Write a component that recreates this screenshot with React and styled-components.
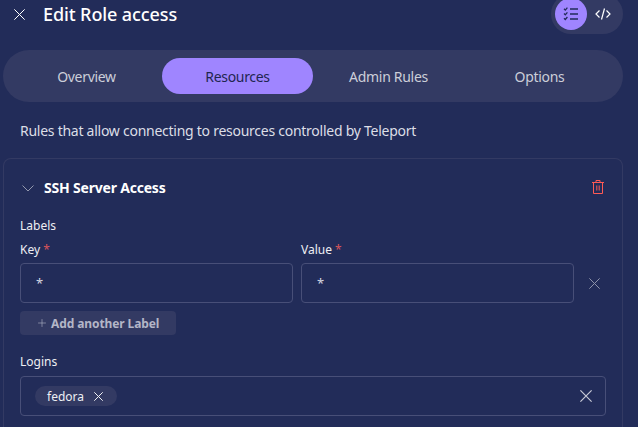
import React from "react";
import styled, { createGlobalStyle } from "styled-components";
import { Plus } from "lucide-react";

const GlobalStyle = createGlobalStyle`
  html, body {
    margin: 0;
    height: 427px;
    overflow: hidden;
    background: #222c59;
  }
  * { box-sizing: border-box; }
`;

const Page = styled.div`
  width: 638px;
  height: 427px;
  overflow: hidden;
  padding: 0 15px 0 3px;
  color: #fff;
  font-family: "Noto Sans", "Open Sans", sans-serif;
`;

const Header = styled.div`
  display: flex;
  align-items: center;
  height: 40px;
  margin-top: -6px;
  padding-left: 8px;
`;

const CloseButton = styled.div`
  display: flex;
  align-items: center;
  justify-content: center;
  width: 16px;
  height: 16px;
  margin-top: 1px;
  color: #fff;
`;

const Title = styled.h1`
  margin: 0 0 0 16px;
  flex: 1;
  font-size: 18px;
  line-height: 24px;
  font-weight: 500;
  letter-spacing: -0.1px;
`;

const ModeSwitch = styled.div`
  display: flex;
  align-items: center;
  width: 72px;
  height: 40px;
  padding: 0 4px;
  border-radius: 20px;
  background: #333a63;
`;

const ModeButton = styled.div`
  display: flex;
  align-items: center;
  justify-content: center;
  width: 32px;
  height: 32px;
  border-radius: 50%;
  background: ${(p) => (p.$active ? "#9f85ff" : "transparent")};
  color: ${(p) => (p.$active ? "#222c59" : "#fff")};
`;

const Tabs = styled.div`
  display: grid;
  grid-template-columns: repeat(4, 151px);
  width: 620px;
  height: 52px;
  margin-top: 16px;
  padding: 8px;
  border-radius: 26px;
  background: #333a63;
`;

const Tab = styled.div`
  display: flex;
  align-items: center;
  justify-content: center;
  border-radius: 18px;
  font-size: 14px;
  letter-spacing: -0.3px;
  background: ${(p) => (p.$active ? "#9f85ff" : "transparent")};
  color: ${(p) => (p.$active ? "#1f2650" : "#ccced9")};
`;

const Description = styled.p`
  margin: 19px 0 0 17px;
  font-size: 14px;
  line-height: 20px;
  letter-spacing: -0.26px;
  color: #dcdee6;
`;

const Card = styled.section`
  width: 620px;
  height: 290px;
  margin-top: 17px;
  padding: 19px 16px 0;
  border: 1px solid #333a63;
  border-bottom: 0;
  border-radius: 8px 8px 0 0;
`;

const CardHead = styled.div`
  display: flex;
  align-items: center;
  height: 20px;
`;

const Chevron = styled.div`
  display: flex;
  align-items: center;
  justify-content: center;
  width: 16px;
  height: 16px;
  margin-right: 8px;
  color: #9499ae;
`;

const CardTitle = styled.h2`
  margin: 0;
  flex: 1;
  font-size: 14px;
  line-height: 20px;
  font-weight: 700;
  letter-spacing: -0.2px;
`;

const TrashIcon = styled.div`
  display: flex;
  margin: -2px 2px 0 0;
  color: #ff5a55;
`;

const SectionLabel = styled.div`
  margin-top: 20px;
  font-size: 12px;
  line-height: 16px;
  color: #eeeff3;
`;

const FieldRow = styled.div`
  display: grid;
  grid-template-columns: 273px 273px 40px;
  column-gap: 8px;
  margin-top: 8px;
`;

const Field = styled.div`
  display: flex;
  flex-direction: column;
`;

const FieldLabel = styled.label`
  margin-bottom: 5px;
  font-size: 12px;
  line-height: 16px;
  color: #eeeff3;
`;

const Required = styled.span`
  color: #d8545a;
`;

const Input = styled.div`
  display: flex;
  align-items: center;
  height: 40px;
  padding: 0 15px;
  border: 1px solid #484f78;
  border-radius: 4px;
  font-size: 13px;
  color: #d5d7e1;
`;

const RemoveRow = styled.div`
  display: flex;
  align-items: center;
  align-self: end;
  height: 40px;
  padding-left: 7px;
  color: #8d92a9;
`;

const AddButton = styled.div`
  display: flex;
  align-items: center;
  gap: 3px;
  width: 156px;
  height: 24px;
  margin-top: 8px;
  padding-left: 16px;
  border-radius: 4px;
  background: #333a63;
  color: #b3b6c7;
  font-size: 12px;
  font-weight: 700;
  letter-spacing: -0.1px;
`;

const LoginsLabel = styled(SectionLabel)`
  margin-top: 19px;
`;

const MultiInput = styled.div`
  display: flex;
  align-items: center;
  justify-content: space-between;
  width: 586px;
  height: 40px;
  margin-top: 6px;
  padding: 0 13px 0 14px;
  border: 1px solid #484f78;
  border-radius: 4px;
`;

const Chip = styled.div`
  display: flex;
  align-items: center;
  gap: 10px;
  height: 20px;
  padding: 0 14px 0 12px;
  border-radius: 10px;
  background: #333a63;
  font-size: 12px;
  color: #eeeff3;
`;

const ClearIcon = styled.div`
  display: flex;
  color: #c8cad6;
`;

const CrossIcon = ({ size, width = 1 }) => (
  <svg width={size} height={size} viewBox="0 0 16 16" fill="none" stroke="currentColor">
    <path d="M.5.5l15 15M15.5.5l-15 15" strokeWidth={(width * 16) / size} />
  </svg>
);

const ChevronIcon = () => (
  <svg width="12" height="7" viewBox="0 0 12 7" fill="none" stroke="currentColor" strokeWidth="1">
    <path d="M.5.5L6 6l5.5-5.5" />
  </svg>
);

const BinIcon = () => (
  <svg width="12" height="14" viewBox="0 0 12 14" fill="none" stroke="currentColor" strokeWidth="1">
    <path d="M0 2.5h12M1.5 2.5v11h9v-11M4 2.5V.5h4v2M4.8 5.5v5M7.2 5.5v5" />
  </svg>
);

const ChecklistIcon = () => (
  <svg width="16" height="16" viewBox="0 0 16 16" fill="none" stroke="currentColor" strokeWidth="1.3">
    <path d="M1 2.8l1.3 1.3L4.4 1.6M1 7.5l1.3 1.3 2.1-2.5M1 12.2l1.3 1.3 2.1-2.5" />
    <path d="M7 3h8M7 8h8M7 13h8" strokeWidth="1.6" />
  </svg>
);

const CodeIcon = () => (
  <svg width="16" height="16" viewBox="0 0 16 16" fill="none" stroke="currentColor" strokeWidth="1.2">
    <path d="M4.5 4.5L1 8l3.5 3.5M11.5 4.5L15 8l-3.5 3.5M9.5 2.5l-3 11" />
  </svg>
);

export default function App() {
  return (
    <>
      <GlobalStyle />
      <Page>
        <Header>
          <CloseButton>
            <CrossIcon size={11} />
          </CloseButton>
          <Title>Edit Role access</Title>
          <ModeSwitch>
            <ModeButton $active>
              <ChecklistIcon />
            </ModeButton>
            <ModeButton>
              <CodeIcon />
            </ModeButton>
          </ModeSwitch>
        </Header>
        <Tabs>
          <Tab>Overview</Tab>
          <Tab $active>Resources</Tab>
          <Tab>Admin Rules</Tab>
          <Tab>Options</Tab>
        </Tabs>
        <Description>Rules that allow connecting to resources controlled by Teleport</Description>
        <Card>
          <CardHead>
            <Chevron>
              <ChevronIcon />
            </Chevron>
            <CardTitle>SSH Server Access</CardTitle>
            <TrashIcon>
              <BinIcon />
            </TrashIcon>
          </CardHead>
          <SectionLabel>Labels</SectionLabel>
          <FieldRow>
            <Field>
              <FieldLabel>
                Key <Required>*</Required>
              </FieldLabel>
              <Input>*</Input>
            </Field>
            <Field>
              <FieldLabel>
                Value <Required>*</Required>
              </FieldLabel>
              <Input>*</Input>
            </Field>
            <RemoveRow>
              <CrossIcon size={11} />
            </RemoveRow>
          </FieldRow>
          <AddButton>
            <Plus size={12} strokeWidth={1.2} />
            Add another Label
          </AddButton>
          <LoginsLabel>Logins</LoginsLabel>
          <MultiInput>
            <Chip>
              fedora
              <CrossIcon size={9} />
            </Chip>
            <ClearIcon>
              <CrossIcon size={12} width={1.2} />
            </ClearIcon>
          </MultiInput>
        </Card>
      </Page>
    </>
  );
}
